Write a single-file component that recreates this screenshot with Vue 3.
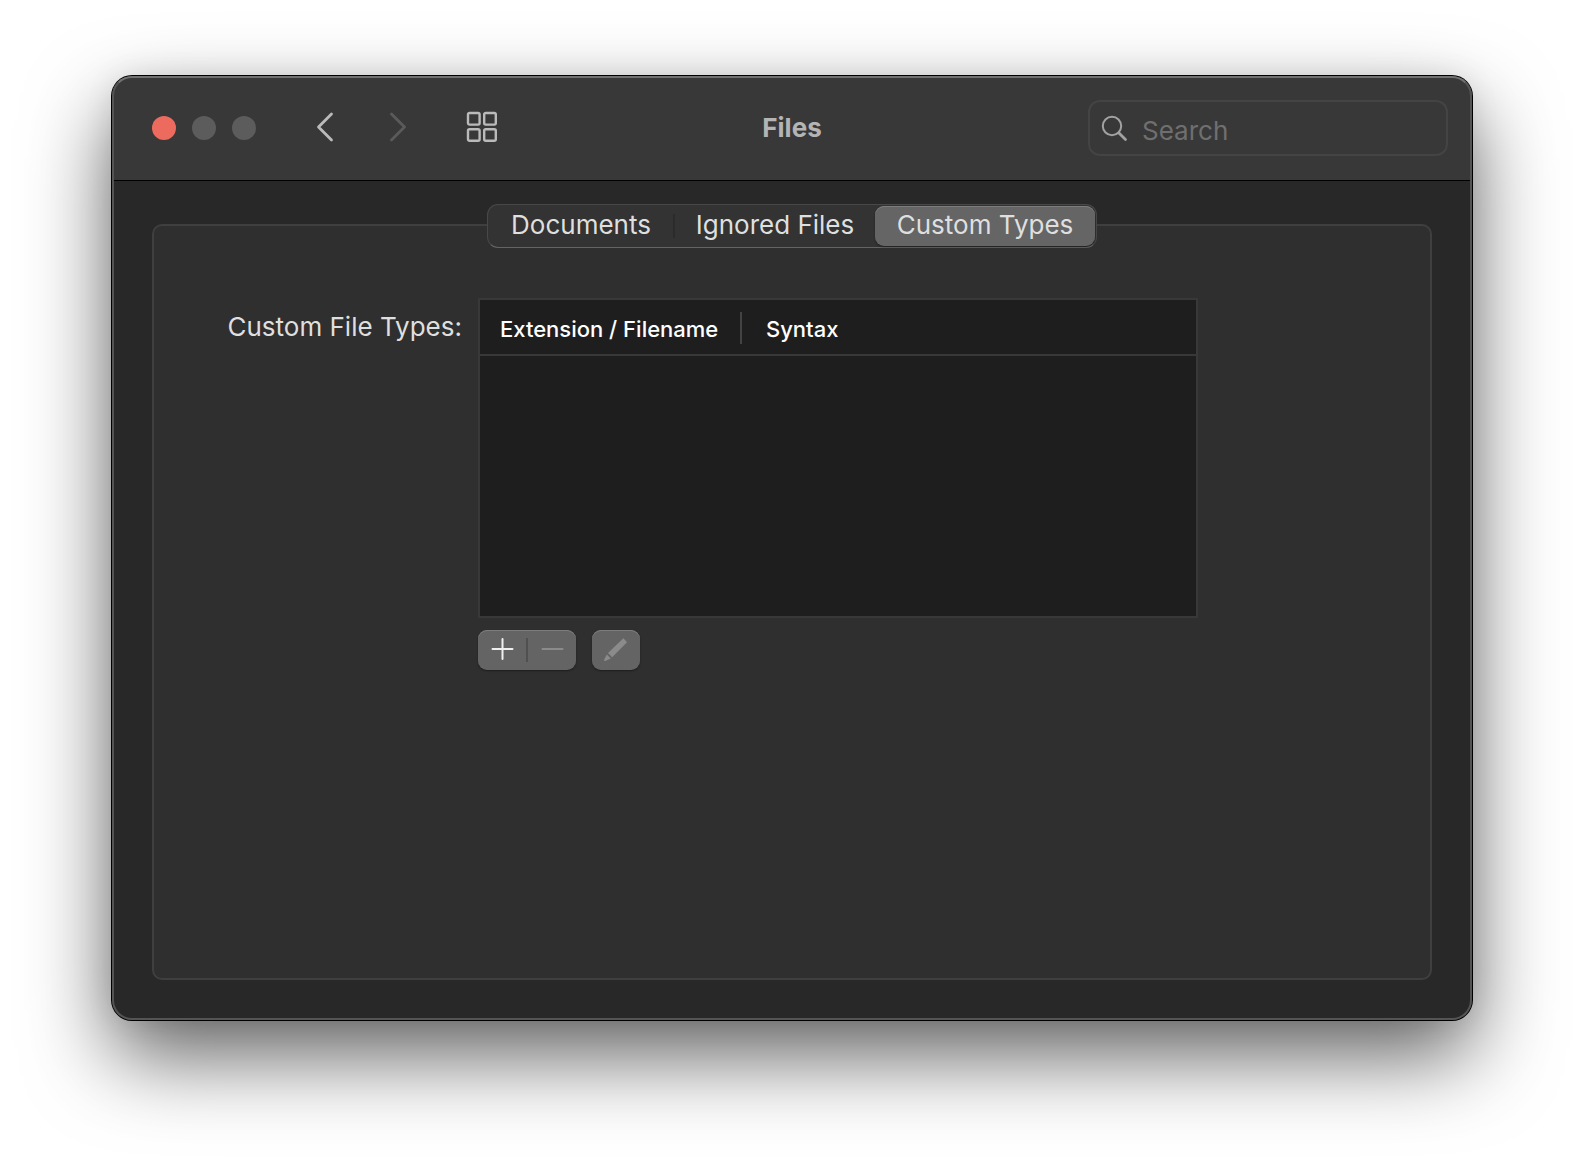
<template>
    <main class="desktop">
        <section class="window">
            <header class="toolbar">
                <div class="toolbar-left">
                    <div class="traffic-lights">
                        <button class="light close" type="button" aria-label="Close"></button>
                        <button class="light" type="button" aria-label="Minimize"></button>
                        <button class="light" type="button" aria-label="Zoom"></button>
                    </div>
                    <nav class="history">
                        <button class="tool-button" type="button" aria-label="Back">
                            <svg width="20" height="32" viewBox="0 0 20 32">
                                <path d="M16.5 3L3.5 16L16.5 29" />
                            </svg>
                        </button>
                        <button class="tool-button" type="button" aria-label="Forward" disabled>
                            <svg width="20" height="32" viewBox="0 0 20 32">
                                <path d="M3.5 3L16.5 16L3.5 29" />
                            </svg>
                        </button>
                    </nav>
                    <button class="tool-button" type="button" aria-label="Show All">
                        <svg class="grid-icon" width="32" height="32" viewBox="0 0 32 32">
                            <rect x="2" y="2" width="11.6" height="11.6" rx="1.5" />
                            <rect x="18.2" y="2" width="11.6" height="11.6" rx="1.5" />
                            <rect x="2" y="18.2" width="11.6" height="11.6" rx="1.5" />
                            <rect x="18.2" y="18.2" width="11.6" height="11.6" rx="1.5" />
                        </svg>
                    </button>
                </div>
                <h1 class="title">Files</h1>
                <label class="search">
                    <svg width="28" height="28" viewBox="0 0 28 28">
                        <circle cx="12" cy="12" r="9.2" />
                        <path d="M18.7 18.7L25.5 25.5" stroke-width="2.8" />
                    </svg>
                    <input v-model="query" type="text" placeholder="Search" aria-label="Search" />
                </label>
            </header>

            <div class="content">
                <div class="tabs" role="tablist">
                    <button v-for="tab in tabs" :key="tab" class="tab" :class="{ selected: tab === activeTab }"
                        type="button" role="tab" :aria-selected="tab === activeTab" @click="activeTab = tab">
                        {{ tab }}
                    </button>
                </div>

                <div class="group-box">
                    <div class="form-row">
                        <span id="types-label" class="form-label">Custom File Types:</span>
                        <div class="types">
                            <div class="table-frame">
                                <table class="types-table" aria-labelledby="types-label">
                                    <thead>
                                        <tr>
                                            <th class="extension"><span>Extension / Filename</span></th>
                                            <th><span>Syntax</span></th>
                                        </tr>
                                    </thead>
                                    <tbody>
                                        <tr v-for="row in rows" :key="row.extension">
                                            <td>{{ row.extension }}</td>
                                            <td>{{ row.syntax }}</td>
                                        </tr>
                                    </tbody>
                                </table>
                            </div>
                            <div class="actions">
                                <div class="button-group">
                                    <button class="action add" type="button" aria-label="Add">
                                        <svg width="24" height="24" viewBox="0 0 24 24">
                                            <path d="M2.5 11H22.5M12.5 1V21" />
                                        </svg>
                                    </button>
                                    <button class="action" type="button" aria-label="Remove" disabled>
                                        <svg width="24" height="24" viewBox="0 0 24 24">
                                            <path d="M2.5 11H22.5" />
                                        </svg>
                                    </button>
                                </div>
                                <div class="button-group">
                                    <button class="action" type="button" aria-label="Edit" disabled>
                                        <svg class="pencil" width="24" height="24" viewBox="0 0 24 24">
                                            <path d="M19.4 0.2L23 4.2L8.2 19.2L4 15Z" />
                                            <path d="M2.8 16.4L6.8 20.6L1.2 22.9Q-0.2 23.2 0.1 21.8Z" />
                                        </svg>
                                    </button>
                                </div>
                            </div>
                        </div>
                    </div>
                </div>
            </div>
        </section>
    </main>
</template>

<script setup>
import { ref } from "vue";

const tabs = ["Documents", "Ignored Files", "Custom Types"];
const activeTab = ref("Custom Types");
const query = ref("");
const rows = ref([]);
</script>

<style>
body {
    margin: 0;
    background-color: #fff;
}
</style>

<style scoped>
.desktop {
    padding: 76px 112px 148px;
    font-family: Inter, "Liberation Sans", sans-serif;
    font-size: 26px;
    line-height: 32px;
    color: #dfdfdf;
}

button,
input {
    margin: 0;
    padding: 0;
    border: none;
    background: none;
    font: inherit;
    color: inherit;
}

svg {
    display: block;
    fill: none;
    stroke: currentColor;
    stroke-width: 2.4;
    stroke-linecap: round;
    stroke-linejoin: round;
}

/* --- Window --- */
.window {
    position: relative;
    border-radius: 20px;
    background-color: #282828;
    box-shadow: 0 0 0 1px #000, 0 36px 84px rgba(0, 0, 0, 0.62), 0 0 30px rgba(0, 0, 0, 0.08);
}

/* light rim drawn over the toolbar and the content */
.window::after {
    content: "";
    position: absolute;
    inset: 0;
    border: 2px solid #545454;
    border-top-color: #717171;
    border-radius: 20px;
    pointer-events: none;
}

/* --- Toolbar --- */
.toolbar {
    display: grid;
    grid-template-columns: 1fr auto 1fr;
    align-items: center;
    height: 104px;
    padding: 0 24px;
    border-bottom: 1px solid #000;
    border-radius: 20px 20px 0 0;
    background-color: #383838;
}

.toolbar-left {
    display: flex;
    align-items: center;
    padding-left: 16px;
    color: #bababa;
}

.traffic-lights {
    display: flex;
    gap: 16px;
}

.light {
    width: 24px;
    height: 24px;
    border-radius: 50%;
    background-color: #5c5c5c;
}

.light.close {
    background-color: #ed6a5e;
}

.history {
    display: flex;
    gap: 53px;
    margin: 0 58px 0 59px;
}

.tool-button {
    padding-bottom: 2px;
}

.tool-button:disabled {
    color: #5a5a5a;
}

.history svg {
    stroke-width: 2.8;
}

.title {
    margin: 0;
    font-size: 26px;
    font-weight: 700;
    color: #b4b4b4;
}

.search {
    display: flex;
    align-items: center;
    justify-self: end;
    gap: 14px;
    box-sizing: border-box;
    width: 360px;
    height: 56px;
    padding: 0 10px;
    border: 2px solid #444;
    border-radius: 12px;
    color: #a2a2a2;
}

.search svg {
    flex: none;
    stroke-width: 2;
}

.search input {
    width: 100%;
    min-width: 0;
    padding-top: 6px;
    outline: none;
}

.search input::placeholder {
    color: #6f6f6f;
    opacity: 1;
}

/* --- Tabs --- */
.content {
    display: flex;
    flex-direction: column;
    padding: 23px 40px 40px;
}

.tabs {
    z-index: 1;
    display: grid;
    grid-template-columns: 186px 200px 220px;
    grid-template-rows: 40px;
    align-self: center;
    padding: 1px;
    border: 1px solid #484848;
    border-bottom-color: #646464;
    border-radius: 11px;
    background-color: #333;
}

.tab {
    display: flex;
    align-items: center;
    justify-content: center;
    padding-bottom: 2px;
    border-radius: 9px;
    line-height: 22px;
    white-space: nowrap;
}

.tab:first-child {
    border-right: 2px solid #2b2b2b;
    border-radius: 0;
    margin: 8px 0;
}

.tab.selected {
    background-color: #656565;
    box-shadow: inset 0 1px #7d7d7d, 0 1px 2px rgba(0, 0, 0, 0.4);
}

/* --- Group box --- */
.group-box {
    margin-top: -24px;
    min-height: 678px;
    padding: 72px 0 2px;
    border: 2px solid #3f3f3f;
    border-radius: 10px;
    background-color: #2f2f2f;
}

.form-row {
    display: grid;
    grid-template-columns: 308px minmax(0, 720px);
    gap: 16px;
}

.form-label {
    padding-top: 13px;
    text-align: right;
}

/* --- Table --- */
.table-frame {
    height: 316px;
    border: 2px solid #383838;
    background-color: #1e1e1e;
}

.types-table {
    width: 100%;
    border-collapse: collapse;
    table-layout: fixed;
    font-size: 22px;
    text-align: left;
    color: #fff;
}

.types-table th {
    padding: 12px 0 10px;
    border-bottom: 2px solid #383838;
    font-weight: 500;
}

.types-table th span {
    display: block;
    padding: 2px 0 0 24px;
    line-height: 30px;
}

.types-table .extension {
    width: 262px;
}

.types-table .extension span {
    padding-left: 20px;
    border-right: 2px solid #434343;
}

/* --- Buttons below the table --- */
.actions {
    display: flex;
    gap: 16px;
    margin-top: 12px;
}

.button-group {
    display: flex;
    border-radius: 9px;
    background-color: #646464;
    box-shadow: inset 0 1px #7d7d7d, 0 1px 2px rgba(0, 0, 0, 0.4);
}

.action {
    display: flex;
    align-items: center;
    justify-content: center;
    width: 48px;
    height: 40px;
}

.action.add {
    width: 50px;
    height: 24px;
    margin: 8px 0;
    border-right: 2px solid #505050;
    color: #efefef;
}

.action:disabled {
    color: #8b8b8b;
}

.action svg {
    stroke-width: 2;
}

.action .pencil {
    fill: currentColor;
    stroke: none;
}
</style>
